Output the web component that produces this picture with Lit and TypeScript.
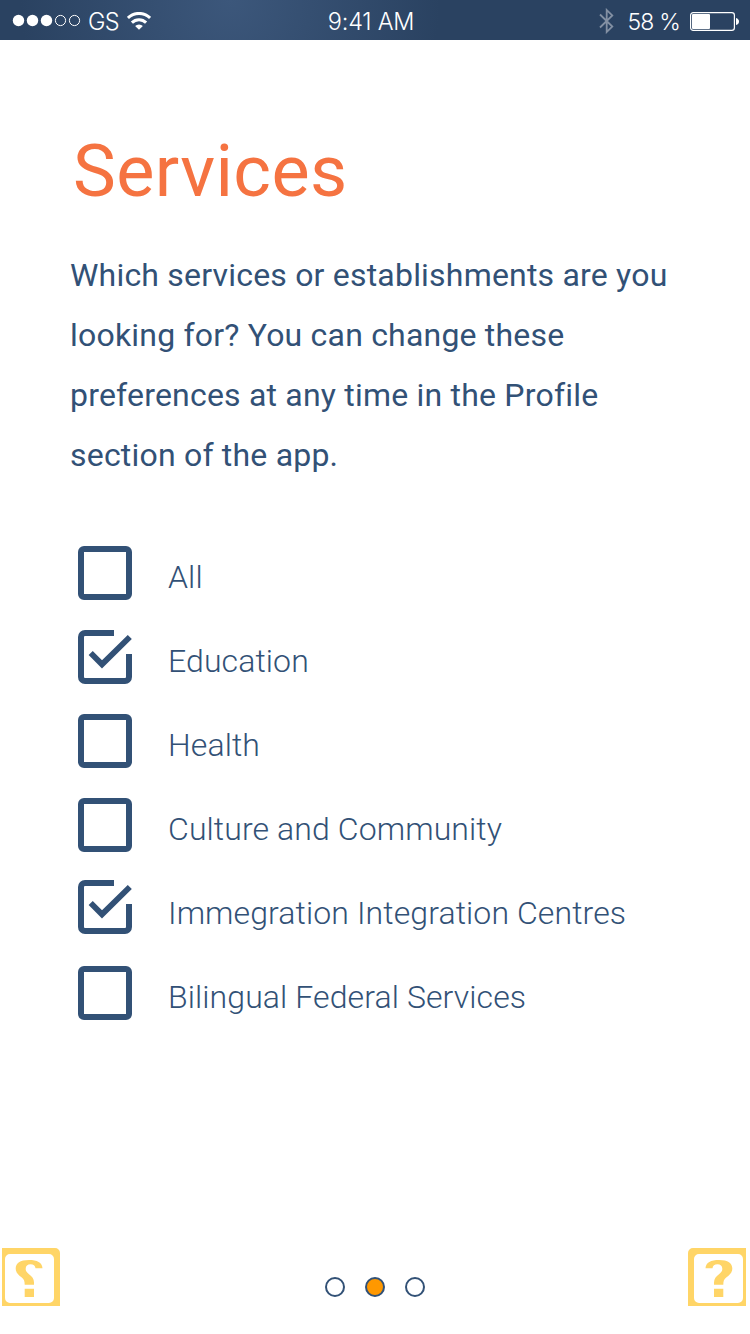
import { LitElement, html, css, svg } from "lit";
import { customElement, property } from "lit/decorators.js";

@customElement("check-row")
class CheckRow extends LitElement {
  @property({ type: Boolean }) checked = false;
  @property() label = "";

  static styles = css`
    :host { display: flex; height: 84px; align-items: flex-start; }
    .box { display: block; width: 54px; height: 54px; flex: none; color: #325176; }
    .label {
      margin-left: 36px;
      margin-top: 11px;
      font: 300 32px/40px Roboto, sans-serif;
      letter-spacing: 0.1px;
      color: #325176;
      white-space: nowrap;
    }
    :host(.raised) .box { margin-top: -2px; }
  `;

  render() {
    const mark = this.checked
      ? svg`<path d="M36 3H7a4 4 0 0 0-4 4v40a4 4 0 0 0 4 4h40a4 4 0 0 0 4-4V24" fill="none" stroke="currentColor" stroke-width="6"/>
          <path d="M12.700 23 24 34.300 51.800 7" fill="none" stroke="currentColor" stroke-width="5.800"/>`
      : svg`<path fill-rule="evenodd" fill="currentColor" d="M6 0h42a6 6 0 0 1 6 6v42a6 6 0 0 1-6 6H6a6 6 0 0 1-6-6V6a6 6 0 0 1 6-6ZM6 6v42h42V6Z"/>`;
    return html`<svg class="box" viewBox="0 0 54 54">${mark}</svg>
      <span class="label">${this.label}</span>`;
  }
}

@customElement("status-bar")
class StatusBar extends LitElement {
  static styles = css`
    :host {
      display: grid;
      grid-template-columns: 1fr auto 1fr;
      align-items: center;
      height: 40px;
      box-sizing: border-box;
      padding: 0 11px 0 12px;
      background: radial-gradient(circle 210px at 230px 0, #3c577b, #2a4261);
      color: #fff;
      font: 300 23.5px/40px Inter, sans-serif;
      white-space: nowrap;
    }
    .left, .right { display: flex; align-items: center; }
    .right { justify-content: flex-end; }
    svg { display: block; flex: none; }
    .carrier { margin: 2px 8px 0 7px; letter-spacing: -0.8px; }
    .time { margin: 2px 9px 0 0; letter-spacing: -0.25px; }
    .percent { margin: 2px 10px 0 13px; letter-spacing: -0.8px; font-size: 23px; }
  `;

  render() {
    return html`
      <div class="left">
        <svg width="69" height="14" viewBox="0 0 69 14">
          <g fill="#fff"><circle cx="6.500" cy="6.500" r="5.700"/><circle cx="20.500" cy="6.500" r="5.700"/><circle cx="34.500" cy="6.500" r="5.700"/></g>
          <g fill="none" stroke="#fff"><circle cx="48.500" cy="6.500" r="5.100"/><circle cx="62.500" cy="6.500" r="5.100"/></g>
        </svg>
        <span class="carrier">GS</span>
        <svg width="24" height="18" viewBox="0 0 24 18">
          <g fill="none" stroke="#fff" stroke-width="3">
            <path d="M.900 6a15.700 15.700 0 0 1 22.200 0"/><path d="M4.900 10.600a10 10 0 0 1 14.200 0"/>
          </g>
          <path fill="#fff" d="M12 17.800 8.100 14a5.500 5.500 0 0 1 7.800 0Z"/>
        </svg>
      </div>
      <span class="time">9:41 AM</span>
      <div class="right">
        <svg width="15" height="26" viewBox="0 0 15 26">
          <path d="M1 6.500 13.300 18.600 7.700 24V2l5.600 5.400L1 19.500" fill="none" stroke="#8390a3" stroke-width="1.800"/>
        </svg>
        <span class="percent">58 %</span>
        <svg width="49" height="19" viewBox="0 0 49 19">
          <rect x=".600" y=".600" width="43.800" height="17.800" rx="2.600" fill="none" stroke="#fff" stroke-width="1.200"/>
          <rect x="2" y="2" width="18" height="15" rx="1" fill="#fff"/>
          <path fill="#fff" d="M46 6q3 1 3 3.500T46 13Z"/>
        </svg>
      </div>`;
  }
}

@customElement("app-root")
class AppRoot extends LitElement {
  private services = [
    { label: "All", checked: false },
    { label: "Education", checked: true },
    { label: "Health", checked: false },
    { label: "Culture and Community", checked: false },
    { label: "Immegration Integration Centres", checked: true, raised: true },
    { label: "Bilingual Federal Services", checked: false },
  ];

  static styles = css`
    :host { display: flex; flex-direction: column; width: 750px; height: 1334px; overflow: hidden; background: #fff; }
    h1 {
      margin: 90px 0 0 73px;
      font: 400 72px/84px Roboto, sans-serif;
      letter-spacing: 0.4px;
      color: #f57341;
    }
    p {
      margin: 31px 0 0 70px;
      font: 400 32px/60px Roboto, sans-serif;
      letter-spacing: 0.2px;
      color: #325176;
      white-space: nowrap;
    }
    .list { margin: 61px 0 0 78px; }
    footer {
      display: flex;
      justify-content: space-between;
      align-items: flex-start;
      margin: auto 4px 28px 2px;
    }
    .help { display: block; width: 58px; height: 58px; }
    .mirrored { transform: scaleX(-1); }
    .dots { display: flex; gap: 20px; margin: 29px 0 0 2px; }
    .dot { box-sizing: border-box; width: 20px; height: 20px; border: 2px solid #325176; border-radius: 50%; }
    .active { background: #ff9800; }
  `;

  private help(cls: string) {
    return html`<svg class=${cls} viewBox="0 0 58 58">
      <path fill="#ffd567" fill-rule="evenodd" d="M5 0h53v58H0V5a5 5 0 0 1 5-5Zm6 6a5 5 0 0 0-5 5v39a5 5 0 0 0 5 5h39a5 5 0 0 0 5-5V11a5 5 0 0 0-5-5Z"/>
      <path fill="#ffd567" d="M17.500 20.300C17.800 14.500 23 12 31 12 40 12 44.300 15.300 44.300 20.500 44.300 25 41 27.300 38.500 29.300 36 31.300 35.300 33 35.300 36.700H26V34.500C26 30.500 28 28.500 31 26.200 33.500 24.300 34.300 23 34.300 20.800 34.300 18 32.500 16.300 29.500 16.300 26.500 16.300 24.800 17.800 24.500 20.300ZM26 40.700h9.300v8.300H26Z"/>
    </svg>`;
  }

  render() {
    return html`
      <status-bar></status-bar>
      <h1>Services</h1>
      <p>Which services or establishments are you<br>looking for? You can change these<br>preferences at any time in the Profile<br>section of the app.</p>
      <div class="list">
        ${this.services.map(
          (s) => html`<check-row class=${s.raised ? "raised" : ""} .label=${s.label} .checked=${s.checked}></check-row>`
        )}
      </div>
      <footer>
        ${this.help("help mirrored")}
        <div class="dots"><span class="dot"></span><span class="dot active"></span><span class="dot"></span></div>
        ${this.help("help")}
      </footer>`;
  }
}
